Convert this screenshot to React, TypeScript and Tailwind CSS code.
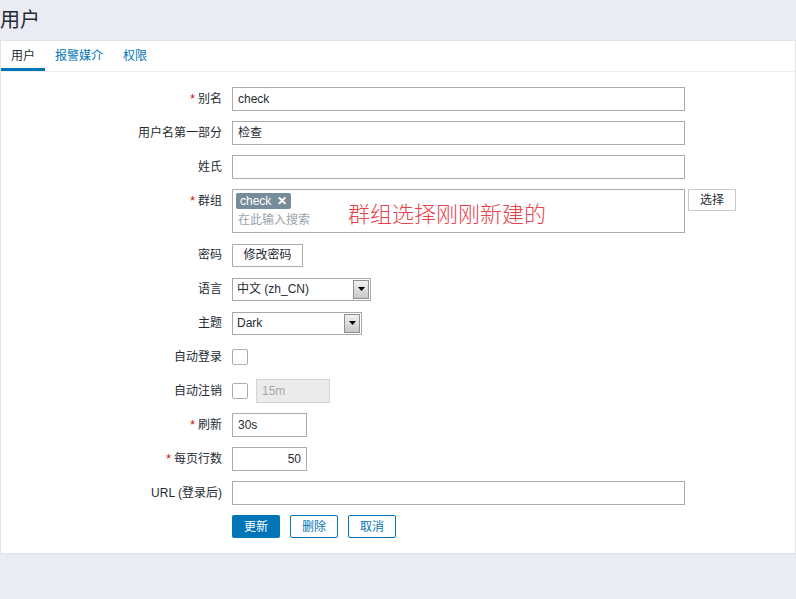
import React from "react";

const font = { fontFamily: '"Liberation Sans", Arial, "Noto Sans CJK SC", sans-serif' };

function Label({ text, req }: { text: string; req?: boolean }) {
  return (
    <div className="w-[231px] shrink-0 pr-[10px] text-right leading-[24px] text-[12px] text-[#1f2c33]">
      {req && <span className="text-[#d40000] mr-[3px]">*</span>}
      {text}
    </div>
  );
}

function Row({ label, req, children }: { label: string; req?: boolean; children: React.ReactNode }) {
  return (
    <div className="flex items-start">
      <Label text={label} req={req} />
      <div className="flex items-center min-h-[24px]">{children}</div>
    </div>
  );
}

function TextInput({ value, w, right }: { value?: string; w: string; right?: boolean }) {
  return (
    <div
      className={`${w} h-[24px] border border-[#acacac] bg-white px-[5px] flex items-center text-[12px] text-[#1f2c33] ${right ? "justify-end" : ""}`}
    >
      {value}
    </div>
  );
}

function Select({ value, w }: { value: string; w: string }) {
  return (
    <div className={`${w} h-[23px] border border-[#a9a9a9] bg-white flex items-center text-[12px] text-[#1f2c33]`}>
      <div className="flex-1 pl-[4px]">{value}</div>
      <div className="w-[16px] h-[19px] mr-[1px] bg-gradient-to-b from-[#f0f0f0] to-[#c8c8c8] border border-[#8f8f8f] flex items-center justify-center">
        <svg width="7" height="4" viewBox="0 0 7 4">
          <path d="M0 0 L7 0 L3.5 4 Z" fill="#000" />
        </svg>
      </div>
    </div>
  );
}

function Checkbox() {
  return <div className="w-[16px] h-[16px] border border-[#acacac] rounded-[2px] bg-white" />;
}

export default function App() {
  return (
    <div className="w-full h-[599px] bg-[#ebebf3] flex flex-col" style={font}>
      <div className="h-[40px] flex items-center">
        <h1 className="text-[20px] text-[#1f2c33] leading-none">用户</h1>
      </div>
      <div className="h-[514px] bg-white border border-[#dfe4e7] flex flex-col">
        <div className="flex h-[31px] border-b border-[#ebeef0] text-[12px]">
          <div className="px-[10px] flex items-center border-b-[3px] border-[#0275b8] text-[#1f2c33] pt-[3px]">用户</div>
          <div className="px-[10px] flex items-center text-[#0275b8] pb-0">报警媒介</div>
          <div className="px-[10px] flex items-center text-[#0275b8]">权限</div>
        </div>
        <div className="flex flex-col gap-[10px] pt-[15px]">
          <Row label="别名" req>
            <TextInput value="check" w="w-[453px]" />
          </Row>
          <Row label="用户名第一部分">
            <TextInput value="检查" w="w-[453px]" />
          </Row>
          <Row label="姓氏">
            <TextInput w="w-[453px]" />
          </Row>
          <Row label="群组" req>
            <div className="flex items-start gap-[3px]">
              <div className="relative w-[453px] h-[44px] border border-[#acacac] bg-white px-[3px] pt-[3px] flex flex-col items-start">
                <div className="flex items-center h-[16px] bg-[#768d99] text-white text-[12px] px-[4px] rounded-[2px] gap-[6px]">
                  <span>check</span>
                  <span className="font-bold text-[12px] leading-none">✕</span>
                </div>
                <div className="text-[12px] leading-[18px] text-[#9aa3a8] pl-[2px] mt-[2px]">在此输入搜索</div>
                <div className="absolute left-[115px] top-[10px] text-[22px] leading-[24px] text-[#e8434c]" style={{ fontFamily: '"Noto Sans CJK SC", sans-serif', fontWeight: 300 }}>
                  群组选择刚刚新建的
                </div>
              </div>
              <button className="w-[48px] h-[22px] border border-[#c9c9c9] bg-white text-[12px] text-[#1f2c33]">选择</button>
            </div>
          </Row>
          <Row label="密码">
            <button className="w-[71px] h-[23px] border border-[#acacac] bg-white text-[12px] text-[#1f2c33]">修改密码</button>
          </Row>
          <Row label="语言">
            <Select value="中文 (zh_CN)" w="w-[139px]" />
          </Row>
          <Row label="主题">
            <Select value="Dark" w="w-[130px]" />
          </Row>
          <Row label="自动登录">
            <Checkbox />
          </Row>
          <Row label="自动注销">
            <div className="flex items-center gap-[8px]">
              <Checkbox />
              <div className="w-[74px] h-[24px] border border-[#d4d4d4] bg-[#ebebeb] px-[5px] flex items-center text-[12px] text-[#a8a8a8]">15m</div>
            </div>
          </Row>
          <Row label="刷新" req>
            <TextInput value="30s" w="w-[75px]" />
          </Row>
          <Row label="每页行数" req>
            <TextInput value="50" w="w-[75px]" right />
          </Row>
          <Row label="URL (登录后)">
            <TextInput w="w-[453px]" />
          </Row>
          <div className="flex">
            <div className="w-[231px] shrink-0" />
            <div className="flex gap-[10px]">
              <button className="w-[48px] h-[23px] bg-[#0275b8] text-white text-[12px] rounded-[2px]">更新</button>
              <button className="w-[48px] h-[23px] bg-white border border-[#0275b8] text-[#0275b8] text-[12px] rounded-[2px]">删除</button>
              <button className="w-[48px] h-[23px] bg-white border border-[#0275b8] text-[#0275b8] text-[12px] rounded-[2px]">取消</button>
            </div>
          </div>
        </div>
      </div>
    </div>
  );
}
